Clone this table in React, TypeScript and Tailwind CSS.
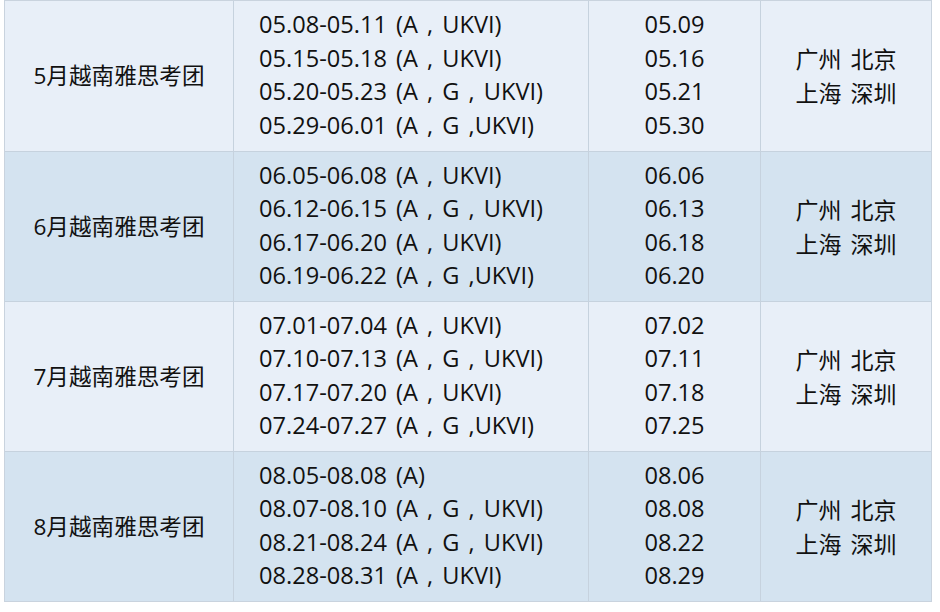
import React from "react";

type Row = { name: string; dates: string[]; days: string[]; bg: string };

const rows: Row[] = [
  {
    name: "5月越南雅思考团",
    dates: [
      "05.08-05.11 (A , UKVI)",
      "05.15-05.18 (A , UKVI)",
      "05.20-05.23 (A , G , UKVI)",
      "05.29-06.01 (A , G ,UKVI)",
    ],
    days: ["05.09", "05.16", "05.21", "05.30"],
    bg: "bg-[#e8eff8]",
  },
  {
    name: "6月越南雅思考团",
    dates: [
      "06.05-06.08 (A , UKVI)",
      "06.12-06.15 (A , G , UKVI)",
      "06.17-06.20 (A , UKVI)",
      "06.19-06.22 (A , G ,UKVI)",
    ],
    days: ["06.06", "06.13", "06.18", "06.20"],
    bg: "bg-[#d4e3f0]",
  },
  {
    name: "7月越南雅思考团",
    dates: [
      "07.01-07.04 (A , UKVI)",
      "07.10-07.13 (A , G , UKVI)",
      "07.17-07.20 (A , UKVI)",
      "07.24-07.27 (A , G ,UKVI)",
    ],
    days: ["07.02", "07.11", "07.18", "07.25"],
    bg: "bg-[#e8eff8]",
  },
  {
    name: "8月越南雅思考团",
    dates: [
      "08.05-08.08 (A)",
      "08.07-08.10 (A , G , UKVI)",
      "08.21-08.24 (A , G , UKVI)",
      "08.28-08.31 (A , UKVI)",
    ],
    days: ["08.06", "08.08", "08.22", "08.29"],
    bg: "bg-[#d4e3f0]",
  },
];

export default function App() {
  return (
    <div
      className="w-[940px] h-[612px] bg-white overflow-hidden text-[#111]"
      style={{ fontFamily: '"Open Sans", "Noto Sans CJK SC", sans-serif' }}
    >
      <div className="ml-[4px] w-[928px] border border-[#c9d3de] flex flex-col">
        {rows.map((r, i) => (
          <div
            key={i}
            className={`grid grid-cols-[229px_355px_172px_170px] h-[150px] ${r.bg} ${
              i > 0 ? "border-t border-[#c6d2de]" : ""
            }`}
          >
            <div className="flex items-center justify-center text-[22.6px] border-r border-[#c6d2de]">
              {r.name}
            </div>
            <div className="flex flex-col justify-center pl-[25px] pb-[2px] text-[23.6px] leading-[33.5px] [word-spacing:3px] border-r border-[#c6d2de]">
              {r.dates.map((d, j) => (
                <div key={j}>{d}</div>
              ))}
            </div>
            <div className="flex flex-col justify-center items-center pb-[2px] text-[23.6px] leading-[33.5px] border-r border-[#c6d2de]">
              {r.days.map((d, j) => (
                <div key={j}>{d}</div>
              ))}
            </div>
            <div className="flex flex-col justify-center items-center text-[23px] leading-[34px] [word-spacing:3px]">
              <div>广州 北京</div>
              <div>上海 深圳</div>
            </div>
          </div>
        ))}
      </div>
    </div>
  );
}
